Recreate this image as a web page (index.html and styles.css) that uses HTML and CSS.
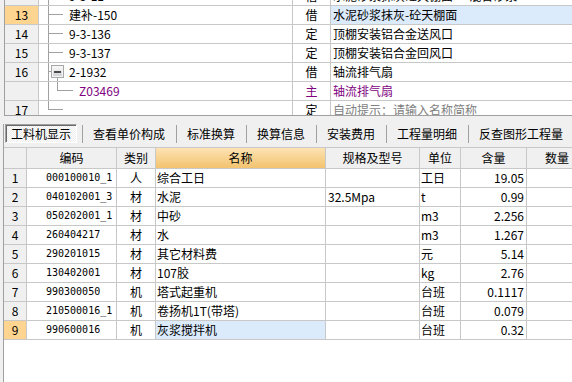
FILE: index.html
```html
<!DOCTYPE html>
<html>
<head>
<meta charset="utf-8">
<link rel="stylesheet" href="styles.css">
</head>
<body>
<div class="upper">
  <div class="urow cut">
    <div class="rn"></div>
    <div class="tree"><svg class="tl" width="30" height="18"><path d="M9.5 0V18M10 8.5H24" /></svg><span>9-3-11</span></div>
    <div class="ty">借</div>
    <div class="nm">水泥砂浆抹灰砼天棚面&nbsp;&nbsp;&nbsp;&nbsp;&nbsp;&nbsp;混合砂浆&nbsp;&nbsp;&nbsp;&nbsp;&nbsp;&nbsp;&nbsp;&nbsp;&nbsp;&nbsp;-</div>
  </div>
  <div class="urow">
    <div class="rn hl">13</div>
    <div class="tree"><svg class="tl" width="30" height="18"><path d="M9.5 0V18M10 8.5H24" /></svg><span>建补-150</span></div>
    <div class="ty">借</div>
    <div class="nm sel">水泥砂浆抹灰-砼天棚面</div>
  </div>
  <div class="urow">
    <div class="rn">14</div>
    <div class="tree"><svg class="tl" width="30" height="18"><path d="M9.5 0V18M10 8.5H24" /></svg><span>9-3-136</span></div>
    <div class="ty">定</div>
    <div class="nm">顶棚安装铝合金送风口</div>
  </div>
  <div class="urow">
    <div class="rn">15</div>
    <div class="tree"><svg class="tl" width="30" height="18"><path d="M9.5 0V18M10 8.5H24" /></svg><span>9-3-137</span></div>
    <div class="ty">定</div>
    <div class="nm">顶棚安装铝合金回风口</div>
  </div>
  <div class="urow">
    <div class="rn">16</div>
    <div class="tree"><svg class="tl" width="30" height="18"><defs><linearGradient id="bx" x1="0" y1="0" x2="0" y2="1"><stop offset="0" stop-color="#ffffff"/><stop offset="1" stop-color="#c8cbd0"/></linearGradient></defs><path d="M9.5 0V18M10 8.5H12M18.5 15V18" /><rect x="12.5" y="2.5" width="12" height="12" fill="url(#bx)" stroke="#a8a8a8"/><rect x="13.5" y="3.5" width="10" height="10" fill="none" stroke="#f4f4f4"/><rect x="15" y="8" width="7" height="2" fill="#4a4a4a" stroke="none"/></svg><span>2-1932</span></div>
    <div class="ty">借</div>
    <div class="nm">轴流排气扇</div>
  </div>
  <div class="urow">
    <div class="rn"></div>
    <div class="tree"><svg class="tl" width="40" height="18"><path d="M9.5 0V18M18.5 0V8.5M18 8.5H34" /></svg><span class="pur">Z03469</span></div>
    <div class="ty pur">主</div>
    <div class="nm pur">轴流排气扇</div>
  </div>
  <div class="urow">
    <div class="rn">17</div>
    <div class="tree"><svg class="tl" width="30" height="18"><path d="M9.5 0V8.5M10 8.5H24" /></svg><span></span></div>
    <div class="ty">定</div>
    <div class="nm hint">自动提示：请输入名称简称</div>
  </div>
</div>

<div class="lower">
  <div class="tabs">
    <div class="tab on">工料机显示</div>
    <div class="tab">查看单价构成</div>
    <div class="tab">标准换算</div>
    <div class="tab">换算信息</div>
    <div class="tab">安装费用</div>
    <div class="tab">工程量明细</div>
    <div class="tab">反查图形工程量</div>
  </div>
  <div class="table">
    <div class="lrow lhead">
      <div class="c rn"></div>
      <div class="c">编码</div>
      <div class="c">类别</div>
      <div class="c hsort">名称</div>
      <div class="c">规格及型号</div>
      <div class="c">单位</div>
      <div class="c">含量</div>
      <div class="c">数量</div>
      <div class="c"></div>
    </div>
    <div class="lrow">
      <div class="c rn">1</div><div class="c code">000100010_1</div><div class="c cat">人</div><div class="c name">综合工日</div><div class="c spec"></div><div class="c unit">工日</div><div class="c qty">19.05</div><div class="c"></div><div class="c"></div>
    </div>
    <div class="lrow">
      <div class="c rn">2</div><div class="c code">040102001_3</div><div class="c cat">材</div><div class="c name">水泥</div><div class="c spec">32.5Mpa</div><div class="c unit">t</div><div class="c qty">0.99</div><div class="c"></div><div class="c"></div>
    </div>
    <div class="lrow">
      <div class="c rn">3</div><div class="c code">050202001_1</div><div class="c cat">材</div><div class="c name">中砂</div><div class="c spec"></div><div class="c unit">m3</div><div class="c qty">2.256</div><div class="c"></div><div class="c"></div>
    </div>
    <div class="lrow">
      <div class="c rn">4</div><div class="c code">260404217</div><div class="c cat">材</div><div class="c name">水</div><div class="c spec"></div><div class="c unit">m3</div><div class="c qty">1.267</div><div class="c"></div><div class="c"></div>
    </div>
    <div class="lrow">
      <div class="c rn">5</div><div class="c code">290201015</div><div class="c cat">材</div><div class="c name">其它材料费</div><div class="c spec"></div><div class="c unit">元</div><div class="c qty">5.14</div><div class="c"></div><div class="c"></div>
    </div>
    <div class="lrow">
      <div class="c rn">6</div><div class="c code">130402001</div><div class="c cat">材</div><div class="c name">107胶</div><div class="c spec"></div><div class="c unit">kg</div><div class="c qty">2.76</div><div class="c"></div><div class="c"></div>
    </div>
    <div class="lrow">
      <div class="c rn">7</div><div class="c code">990300050</div><div class="c cat">机</div><div class="c name">塔式起重机</div><div class="c spec"></div><div class="c unit">台班</div><div class="c qty">0.1117</div><div class="c"></div><div class="c"></div>
    </div>
    <div class="lrow">
      <div class="c rn">8</div><div class="c code">210500016_1</div><div class="c cat">机</div><div class="c name">卷扬机1T(带塔)</div><div class="c spec"></div><div class="c unit">台班</div><div class="c qty">0.079</div><div class="c"></div><div class="c"></div>
    </div>
    <div class="lrow">
      <div class="c rn hl">9</div><div class="c code">990600016</div><div class="c cat">机</div><div class="c name sel">灰浆搅拌机</div><div class="c spec"></div><div class="c unit">台班</div><div class="c qty">0.32</div><div class="c"></div><div class="c"></div>
    </div>
  </div>
</div>
</body>
</html>
```

FILE: styles.css
```css
* { box-sizing: border-box; margin: 0; padding: 0; }
html, body { width: 572px; height: 382px; overflow: hidden; }
body {
  background: #f0f0f0;
  font-family: "Noto Sans CJK SC", "Liberation Sans", sans-serif;
  font-size: 12px;
  line-height: 18px;
  color: #000;
}

/* upper tree grid */
.upper {
  margin-left: 4px;
  height: 116px;
  overflow: hidden;
  background: #fff;
  border-left: 1px solid #a0a0a0;
  border-bottom: 1px solid #a0a0a0;
}
.urow {
  display: grid;
  grid-template-columns: 34px 254px 38px 1fr;
  height: 19px;
}
.urow.cut { margin-top: -13px; }
.urow > div {
  border-bottom: 1px solid #c8c8c8;
  border-right: 1px solid #c8c8c8;
  white-space: nowrap;
  overflow: hidden;
  height: 19px;
}
.urow > .nm { border-right: none; padding-left: 2px; }
.rn { background: #f0f0f0; text-align: center; }
.rn.hl { background: #fed590; }
.tree { display: flex; align-items: flex-start; }
.tl { display: block; flex: none; stroke: #a0a0a0; fill: none; shape-rendering: crispEdges; }
.ty { text-align: center; }
.sel { background: #dcebfc; }
.pur { color: #800080; }
.hint { color: #808080; }

/* lower panel */
.lower {
  margin-top: 8px;
  margin-left: 3px;
  height: 258px;
  border-left: 1px solid #a0a0a0;
  background: #fff;
  overflow: hidden;
}
.tabs {
  display: flex;
  align-items: flex-start;
  height: 23px;
  background: #f0f0f0;
}
.tab {
  flex: none;
  height: 18px;
  margin-top: 1px;
  line-height: 18px;
  padding: 0 11px 0 10px;
  border-left: 1px solid #a0a0a0;
  white-space: nowrap;
}
.tab.on {
  margin-top: 0;
  margin-left: 1px;
  margin-right: 5px;
  height: 19px;
  line-height: 17px;
  padding: 0 5px;
  border: 1px solid;
  border-color: #a0a0a0 #ffffff #ffffff #a0a0a0;
  box-shadow: inset 1px 1px 0 #696969;
  background: repeating-conic-gradient(#ffffff 0 25%, #ececec 0 50%) 0 0 / 2px 2px;
}

.table { width: 640px; }
.lrow {
  display: grid;
  grid-template-columns: 23px 90px 39px 170px 94px 41px 66px 61px 1fr;
  height: 19px;
}
.c {
  height: 19px;
  border-right: 1px solid #c8c8c8;
  border-bottom: 1px solid #c8c8c8;
  white-space: nowrap;
  overflow: hidden;
}
.lhead { height: 22px; border-top: 1px solid #c8c8c8; }
.lhead .c {
  height: 21px;
  line-height: 20px;
  background: #f0f0f0;
  text-align: center;
}
.lhead .hsort { background: linear-gradient(#fde3b3, #f3c36f); }
.code {
  padding-left: 19px;
  font-family: "DejaVu Sans Mono", "Liberation Mono", monospace;
  font-size: 10px;
}
.cat { text-align: center; }
.name { padding-left: 1px; }
.spec { padding-left: 2px; }
.unit { padding-left: 1px; }
.qty { text-align: right; padding-right: 2px; }
```
